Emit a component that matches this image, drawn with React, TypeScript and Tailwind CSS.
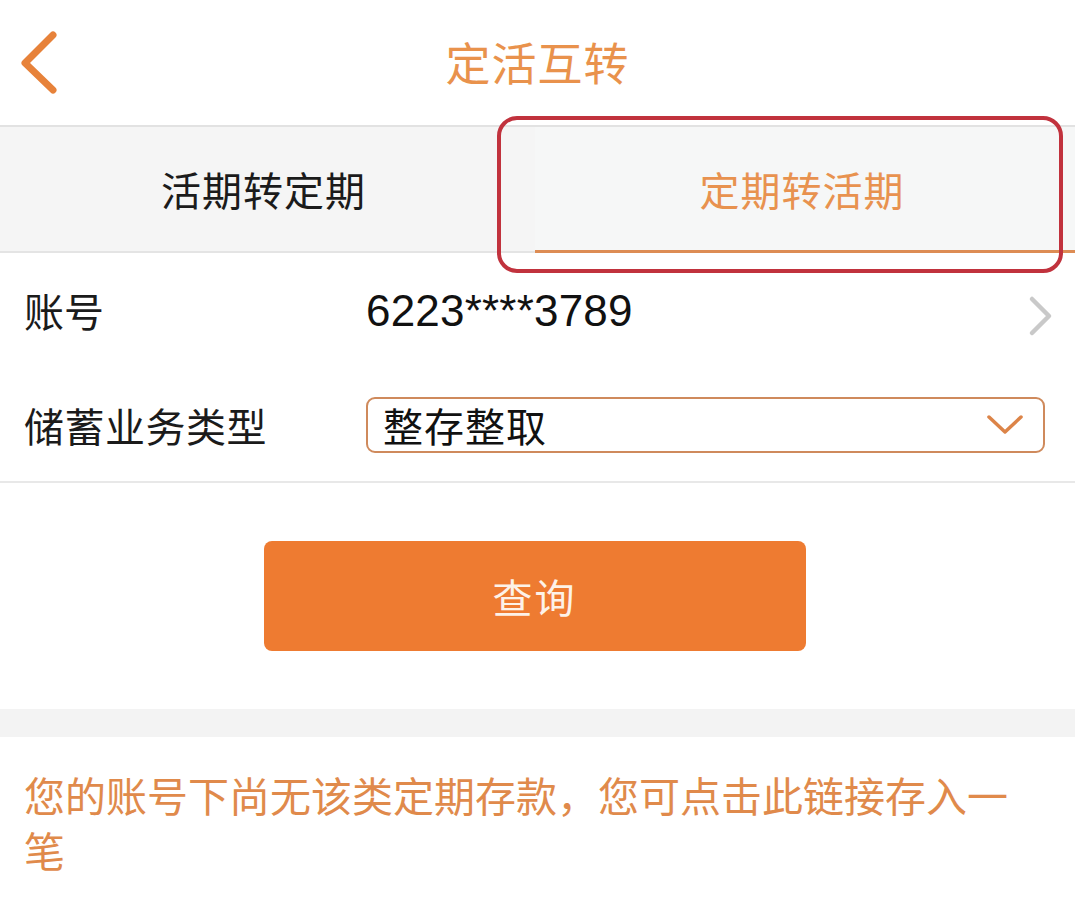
import React from "react";

const cjk = { fontFamily: '"Noto Sans CJK SC", "Noto Sans", sans-serif' };

export default function App() {
  return (
    <div className="relative w-[1075px] h-[901px] bg-white overflow-hidden" style={cjk}>
      {/* Header */}
      <div className="relative h-[127px] flex items-center justify-center border-b-2 border-[#e2e2e2]">
        <svg className="absolute left-[16px] top-[28px]" width="46" height="70" viewBox="0 0 46 70">
          <polyline points="37,7 9,35 37,62" fill="none" stroke="#e7823a" strokeWidth="7" strokeLinecap="round" strokeLinejoin="round" />
        </svg>
        <div className="text-[45px] leading-none text-[#e9924c] tracking-[1px] -mt-[2px]">定活互转</div>
      </div>

      {/* Tabs */}
      <div className="flex h-[126px] bg-[#f5f5f5] border-b-2 border-[#e4e4e4]">
        <div className="w-[535px] flex items-center justify-center pr-[8px]">
          <span className="text-[40px] leading-none text-[#1b1b1b] tracking-[1px]">活期转定期</span>
        </div>
        <div className="flex-1 flex items-center justify-center pr-[6px] border-b-[3px] border-[#dd8c54] -mb-[2px] bg-[#f6f7f7]">
          <span className="text-[40px] leading-none text-[#e8924f] tracking-[1px]">定期转活期</span>
        </div>
      </div>

      {/* Account row */}
      <div className="flex items-center h-[116px] pl-[24px] pr-[22px]">
        <div className="w-[342px] text-[40px] leading-none text-[#1b1b1b] -mt-[3px]">账号</div>
        <div className="flex-1 text-[44px] leading-none text-[#111] tracking-[0.2px]" style={{ fontFamily: '"Liberation Sans", Arial, sans-serif' }}>
          6223****3789
        </div>
        <svg width="26" height="42" viewBox="0 0 26 42" className="mt-[10px]">
          <polyline points="5,4 22,21 5,38" fill="none" stroke="#c9c9c9" strokeWidth="4.5" strokeLinecap="round" strokeLinejoin="round" />
        </svg>
      </div>

      {/* Type row */}
      <div className="flex items-center h-[114px] pl-[24px] pr-[30px] border-b-2 border-[#e8e8e8]">
        <div className="w-[342px] text-[40px] leading-none text-[#1b1b1b] tracking-[0.5px]">储蓄业务类型</div>
        <div className="flex-1 h-[56px] flex items-center justify-between pl-[15px] pr-[18px] border-2 border-[#cf8a5c] rounded-[9px]">
          <span className="text-[40px] leading-none text-[#111] tracking-[1px]">整存整取</span>
          <svg width="40" height="24" viewBox="0 0 40 24">
            <polyline points="4,4 20,19 36,4" fill="none" stroke="#dc8448" strokeWidth="3.5" strokeLinecap="round" strokeLinejoin="round" />
          </svg>
        </div>
      </div>

      {/* Button */}
      <div className="flex justify-center pt-[58px] pb-[58px] pr-[6px]">
        <button className="w-[542px] h-[110px] rounded-[8px] bg-[#ee7b31] flex items-center justify-center">
          <span className="text-[40px] leading-none text-[#fdf2e8] tracking-[2px]">查询</span>
        </button>
      </div>

      {/* Gray band */}
      <div className="h-[28px] bg-[#f3f3f3]" />

      {/* Message */}
      <div className="pl-[24px] pr-[40px] pt-[30px] text-[41px] leading-[55px] text-[#e08a4b]">
        您的账号下尚无该类定期存款，您可点击此链接存入一笔
      </div>

      {/* Annotation overlay */}
      <div className="absolute left-[497px] top-[116px] w-[566px] h-[157px] border-[4px] border-[#c1323d] rounded-[20px] pointer-events-none" />
    </div>
  );
}
